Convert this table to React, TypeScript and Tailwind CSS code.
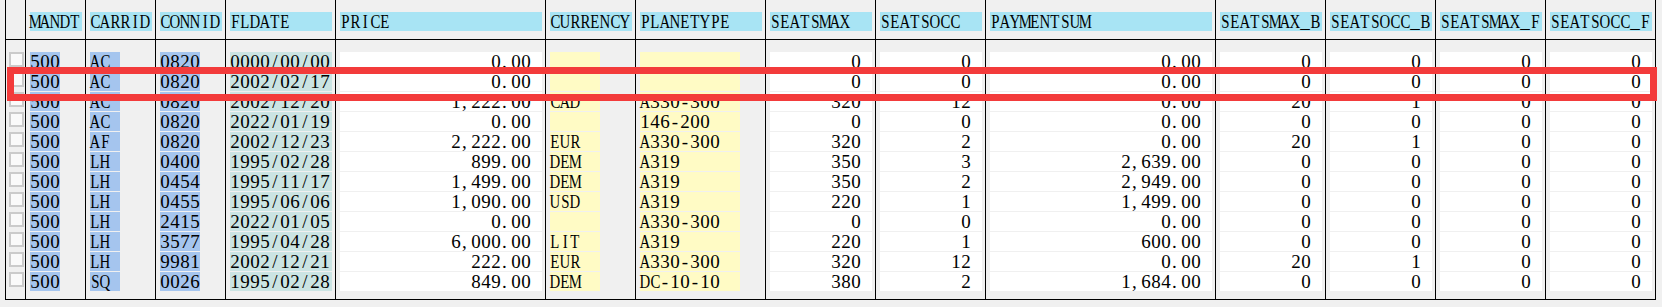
import React from "react";

type Col = {
  key: string;
  width: string;
  fill: string;
  bg: string;
  right?: boolean;
};

const cols: Col[] = [
  { key: "MANDT", width: "w-[60px]", fill: "w-[30px]", bg: "bg-[#a5c5ee]" },
  { key: "CARRID", width: "w-[70px]", fill: "w-[30px]", bg: "bg-[#a5c5ee]" },
  { key: "CONNID", width: "w-[70px]", fill: "w-[40px]", bg: "bg-[#a5c5ee]" },
  { key: "FLDATE", width: "w-[110px]", fill: "flex-1", bg: "bg-[#cbe4e3]" },
  { key: "PRICE", width: "w-[210px]", fill: "flex-1", bg: "bg-white", right: true },
  { key: "CURRENCY", width: "w-[90px]", fill: "w-[50px]", bg: "bg-[#fffbc5]" },
  { key: "PLANETYPE", width: "w-[130px]", fill: "w-[100px]", bg: "bg-[#fffbc5]" },
  { key: "SEATSMAX", width: "w-[110px]", fill: "flex-1", bg: "bg-white", right: true },
  { key: "SEATSOCC", width: "w-[110px]", fill: "flex-1", bg: "bg-white", right: true },
  { key: "PAYMENTSUM", width: "w-[230px]", fill: "flex-1", bg: "bg-white", right: true },
  { key: "SEATSMAX_B", width: "w-[110px]", fill: "flex-1", bg: "bg-white", right: true },
  { key: "SEATSOCC_B", width: "w-[110px]", fill: "flex-1", bg: "bg-white", right: true },
  { key: "SEATSMAX_F", width: "w-[110px]", fill: "flex-1", bg: "bg-white", right: true },
  { key: "SEATSOCC_F", width: "w-[110px]", fill: "flex-1", bg: "bg-white", right: true },
];

// MANDT CARRID CONNID FLDATE PRICE CURRENCY PLANETYPE SEATSMAX SEATSOCC PAYMENTSUM B B F F
const rows: string[][] = [
  ["500", "AC", "0820", "0000/00/00", "0.00", "", "", "0", "0", "0.00", "0", "0", "0", "0"],
  ["500", "AC", "0820", "2002/02/17", "0.00", "", "", "0", "0", "0.00", "0", "0", "0", "0"],
  ["500", "AC", "0820", "2002/12/20", "1,222.00", "CAD", "A330-300", "320", "12", "0.00", "20", "1", "0", "0"],
  ["500", "AC", "0820", "2022/01/19", "0.00", "", "146-200", "0", "0", "0.00", "0", "0", "0", "0"],
  ["500", "AF", "0820", "2002/12/23", "2,222.00", "EUR", "A330-300", "320", "2", "0.00", "20", "1", "0", "0"],
  ["500", "LH", "0400", "1995/02/28", "899.00", "DEM", "A319", "350", "3", "2,639.00", "0", "0", "0", "0"],
  ["500", "LH", "0454", "1995/11/17", "1,499.00", "DEM", "A319", "350", "2", "2,949.00", "0", "0", "0", "0"],
  ["500", "LH", "0455", "1995/06/06", "1,090.00", "USD", "A319", "220", "1", "1,499.00", "0", "0", "0", "0"],
  ["500", "LH", "2415", "2022/01/05", "0.00", "", "A330-300", "0", "0", "0.00", "0", "0", "0", "0"],
  ["500", "LH", "3577", "1995/04/28", "6,000.00", "LIT", "A319", "220", "1", "600.00", "0", "0", "0", "0"],
  ["500", "LH", "9981", "2002/12/21", "222.00", "EUR", "A330-300", "320", "12", "0.00", "20", "1", "0", "0"],
  ["500", "SQ", "0026", "1995/02/28", "849.00", "DEM", "DC-10-10", "380", "2", "1,684.00", "0", "0", "0", "0"],
];

// the grid font is a fixed pitch song face; fake it with one 10px cell per char
function Mono({ text }: { text: string }) {
  return (
    <>
      {text.split("").map((ch, i) => {
        const upper = /[A-Z]/.test(ch);
        const punct = ch === "." || ch === ",";
        return (
          <span
            key={i}
            className={`inline-flex w-[10px] ${punct ? "justify-start pl-px" : "justify-center"}`}
          >
            <span className={upper ? "inline-block scale-x-[0.78]" : ""}>{ch}</span>
          </span>
        );
      })}
    </>
  );
}

const font = "[font-family:Liberation_Serif,Times_New_Roman,serif] text-[19px] text-black";

export default function App() {
  return (
    <div className={`relative h-[307px] w-full bg-[#f0f0f0] ${font}`}>
      <div className="ml-[5px] flex h-[300px] w-[1651px] border-b border-l border-black">
        {/* selection column */}
        <div className="flex w-[20px] flex-col border-r border-black">
          <div className="h-[40px] border-b border-black" />
          <div className="flex flex-col gap-px pt-[12px]">
            {rows.map((_, i) => (
              <div key={i} className="h-[19px] pl-[3px]">
                <div className="h-[15px] w-[15px] border-2 border-[#cbcbcb] bg-[#fafafa]" />
              </div>
            ))}
          </div>
        </div>

        {cols.map((col, c) => (
          <div key={col.key} className={`flex ${col.width} flex-col border-r border-black`}>
            <div className="h-[40px] border-b border-black pl-[4px] pr-[3px] pt-[12px]">
              <div className="h-[19px] whitespace-nowrap bg-[#a8e4f4] leading-[19px]">
                <Mono text={col.key} />
              </div>
            </div>
            <div className="flex flex-col gap-px pt-[12px]">
              {rows.map((row, r) => (
                <div key={r} className="flex h-[19px] pl-[4px] pr-[3px]">
                  <div
                    className={`${col.fill} ${col.bg} h-[19px] whitespace-nowrap leading-[19px] ${
                      col.right ? "pr-[11px] text-right" : ""
                    }`}
                  >
                    <Mono text={row[c]} />
                  </div>
                </div>
              ))}
            </div>
          </div>
        ))}
      </div>

      <div className="absolute left-[7px] top-[67px] h-[34px] w-[1650px] border-[7px] border-[#f33b3b]" />
    </div>
  );
}
